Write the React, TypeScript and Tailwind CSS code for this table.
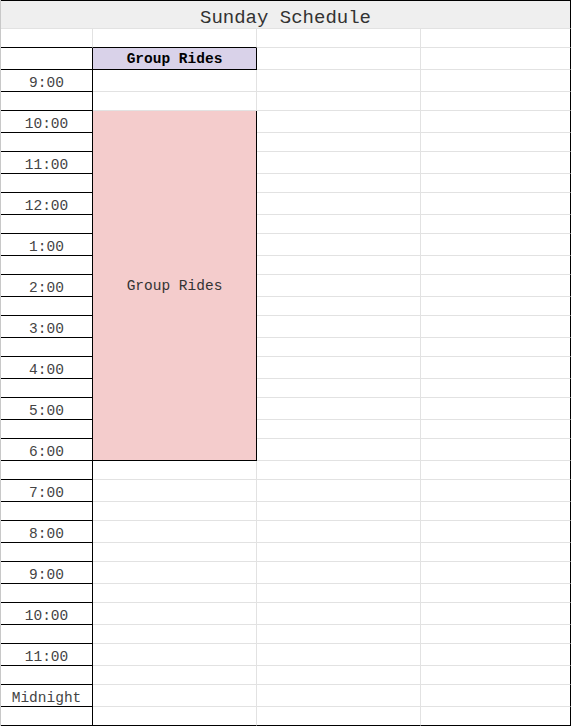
const hours = [
  "9:00",
  "10:00",
  "11:00",
  "12:00",
  "1:00",
  "2:00",
  "3:00",
  "4:00",
  "5:00",
  "6:00",
  "7:00",
  "8:00",
  "9:00",
  "10:00",
  "11:00",
  "Midnight",
];

// each hour is a labelled row plus an empty half-hour row
const rows = hours.flatMap((h) => [h, ""]);

// the group rides block starts at 10:00 and ends with the 6:00 row
const blockStart = 2;
const blockSpan = 17;

export default function App() {
  const last = rows.length - 1;

  return (
    <div className="min-h-screen bg-white" style={{ fontFamily: '"Liberation Mono", "Courier New", monospace' }}>
      <div className="grid w-[571px] grid-cols-[92px_164px_164px_150px] grid-rows-[29px_19px_22px_repeat(16,22px_19px)] border-l border-[#c8c8c8]">
        {/* title */}
        <div className="col-span-4 flex items-end justify-center border-t border-r border-b border-t-black border-r-black border-b-[#e2e2e2] bg-[#efefef] text-[19px] leading-[19px] text-[#333]">
          Sunday Schedule
        </div>

        {/* blank row */}
        <div className="border-r border-b border-r-[#e2e2e2] border-b-black" />
        <div className="border-r border-b border-r-[#e2e2e2] border-b-black" />
        <div className="border-r border-b border-[#e2e2e2]" />
        <div className="border-r border-b border-r-black border-b-[#e2e2e2]" />

        {/* header */}
        <div className="border-r border-b border-black" />
        <div className="flex items-end justify-center border-r border-b border-black bg-[#d9d2e9] pb-[3px] text-[14.5px] leading-[14px] font-bold text-black">
          Group Rides
        </div>
        <div className="border-r border-b border-[#e2e2e2]" />
        <div className="border-r border-b border-r-black border-b-[#e2e2e2]" />

        {rows.map((label, i) => {
          const bottom = i === last ? "border-b-black" : "border-b-[#e2e2e2]";
          const inBlock = i >= blockStart && i < blockStart + blockSpan;
          return [
            <div
              key={`t${i}`}
              className="flex items-end justify-center border-r border-b border-black pb-[1px] text-[14.5px] leading-[14px] text-[#444]"
            >
              {label}
            </div>,
            i === blockStart ? (
              <div
                key={`b${i}`}
                className="row-[span_17/span_17] flex items-center justify-center border-r border-b border-black bg-[#f4cccc] pt-[1px] text-[14.5px] leading-[14px] text-[#333]"
              >
                Group Rides
              </div>
            ) : inBlock ? null : (
              <div key={`b${i}`} className={`border-r border-b border-r-[#e2e2e2] ${bottom}`} />
            ),
            <div key={`c${i}`} className={`border-r border-b border-r-[#e2e2e2] ${bottom}`} />,
            <div key={`d${i}`} className={`border-r border-b border-r-black ${bottom}`} />,
          ];
        })}
      </div>
    </div>
  );
}
